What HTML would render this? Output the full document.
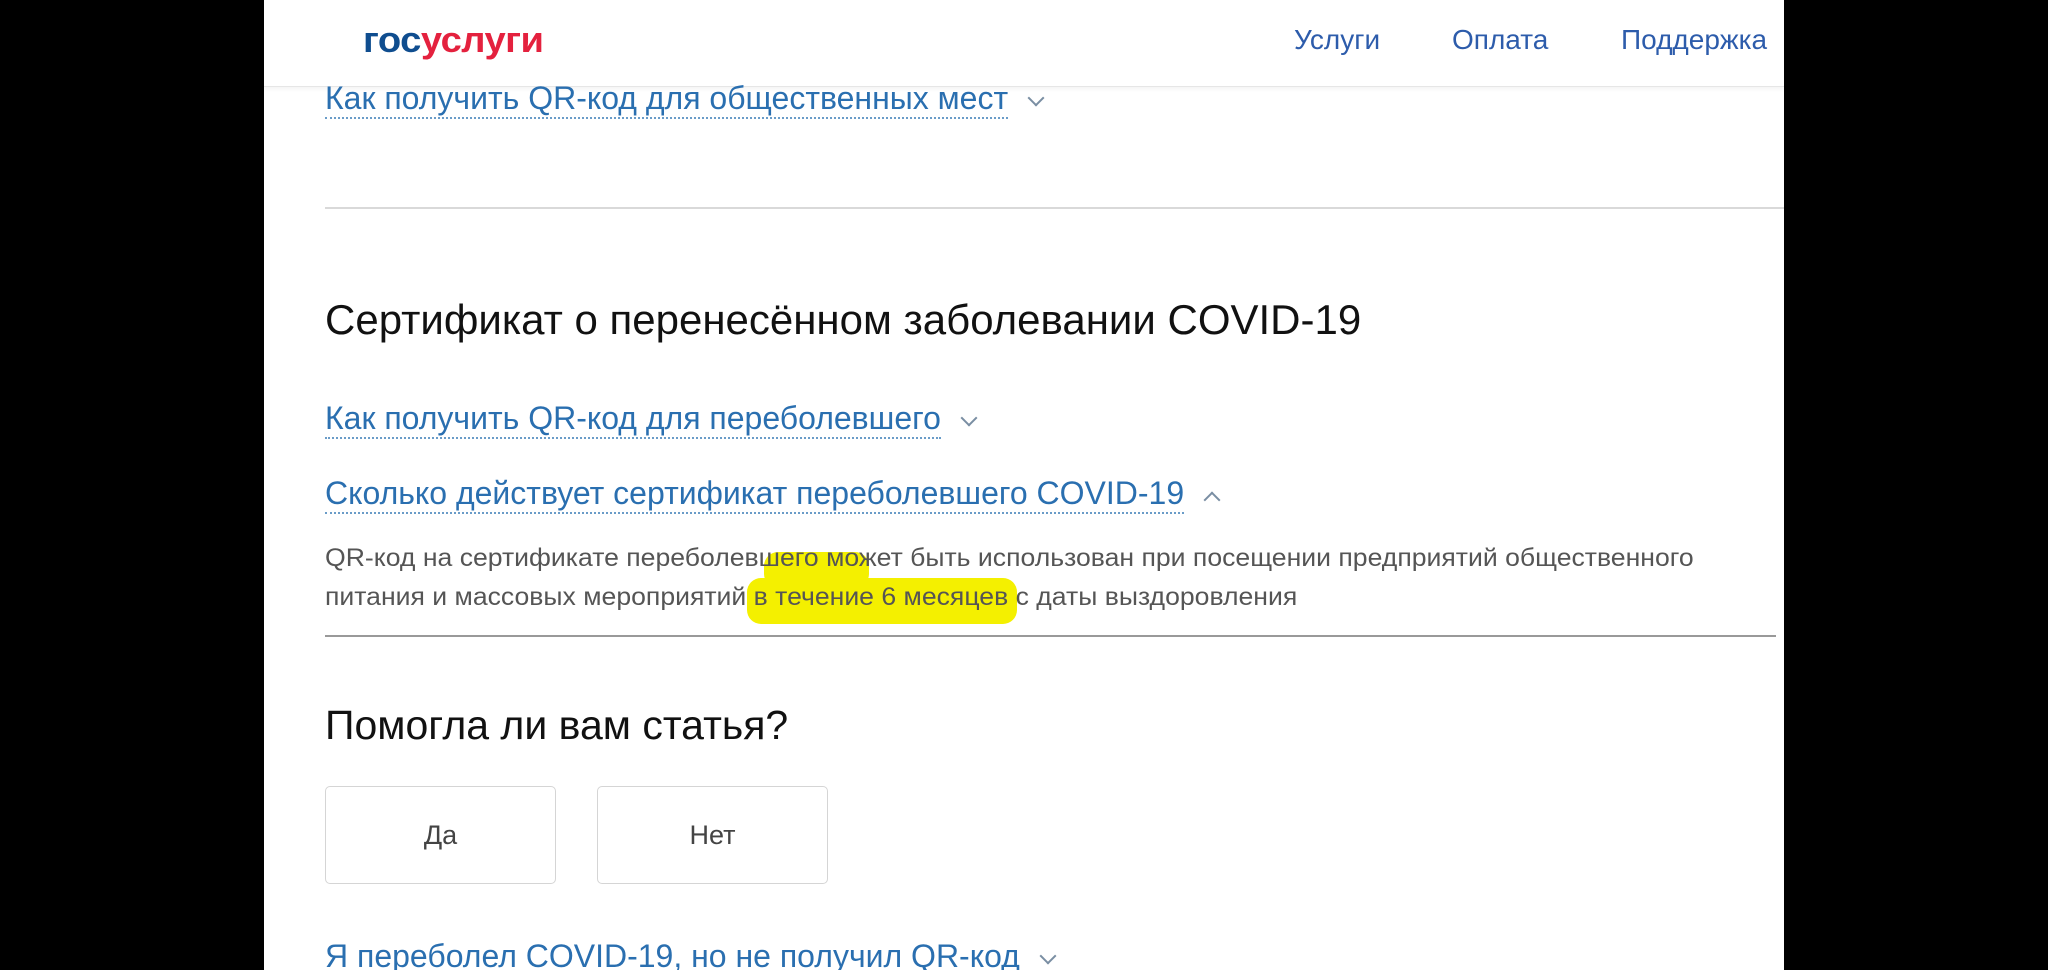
<!DOCTYPE html>
<html><head><meta charset="utf-8"><style>
*{margin:0;padding:0;box-sizing:border-box}
html,body{width:2048px;height:970px;background:#000;overflow:hidden;font-family:"Liberation Sans",Arial,sans-serif}
#page{position:absolute;left:264px;top:0;width:1520px;height:970px;background:#fff;overflow:hidden}
.a{position:absolute;white-space:nowrap}
.hdr{position:absolute;left:0;top:0;width:1520px;height:87px;border-bottom:1px solid #e6e6e6;box-shadow:0 2px 4px rgba(0,0,0,.05)}
.nav{color:#2d5cab;font-size:28px;top:24px}
.lnk{color:#2a6fb0;font-size:32px;border-bottom:2px dotted #6a9cc8;line-height:37px}
.chev{position:absolute;width:12px;height:12px;border-right:2px solid #7a8ea3;border-bottom:2px solid #7a8ea3}
.p{color:#555;font-size:25px;transform:scaleX(1.064);transform-origin:left}
.btn{position:absolute;top:786px;width:231px;height:98px;border:1px solid #d5d5d5;border-radius:5px;font-size:27px;color:#444;text-align:center;line-height:96px}
</style></head><body><div id="page">
<div class="hdr"></div>
<div class="a" style="left:99px;top:19px;font-size:36px;font-weight:bold;letter-spacing:-0.5px;transform:scaleX(1.06);transform-origin:left"><span style="color:#0f4d8f">гос</span><span style="color:#e4213e">услуги</span></div>
<div class="a nav" style="left:1030px">Услуги</div>
<div class="a nav" style="left:1188px">Оплата</div>
<div class="a nav" style="left:1357px">Поддержка</div>

<div class="a lnk" style="left:61px;top:80px">Как получить QR-код для общественных мест</div>
<div class="chev" style="left:766px;top:92px;transform:rotate(45deg)"></div>
<div class="a" style="left:61px;top:207px;width:1460px;height:2px;background:#d9d9d9"></div>

<div class="a" style="left:61px;top:296px;font-size:42px;color:#111">Сертификат о перенесённом заболевании COVID-19</div>

<div class="a lnk" style="left:61px;top:400px">Как получить QR-код для переболевшего</div>
<div class="chev" style="left:699px;top:412px;transform:rotate(45deg)"></div>
<div class="a lnk" style="left:61px;top:475px">Сколько действует сертификат переболевшего COVID-19</div>
<div class="chev" style="left:942px;top:494px;transform:rotate(225deg)"></div>

<div class="a" style="left:483px;top:578px;width:270px;height:46px;background:#f4f000;border-radius:14px"></div>
<div class="a" style="left:500px;top:552px;width:105px;height:36px;background:#f4f000;border-radius:14px"></div>
<div class="a p" style="left:61px;top:544px">QR-код на сертификате переболевшего может быть использован при посещении предприятий общественного</div>
<div class="a p" style="left:61px;top:583px">питания и массовых мероприятий в течение 6 месяцев с даты выздоровления</div>
<div class="a" style="left:61px;top:635px;width:1451px;height:2px;background:#999"></div>

<div class="a" style="left:61px;top:702px;font-size:41px;color:#111">Помогла ли вам статья?</div>
<div class="btn" style="left:61px">Да</div>
<div class="btn" style="left:333px">Нет</div>
<div class="a lnk" style="left:61px;top:938px;border:0">Я переболел COVID-19, но не получил QR-код</div>
<div class="chev" style="left:778px;top:950px;transform:rotate(45deg)"></div>
</div></body></html>
